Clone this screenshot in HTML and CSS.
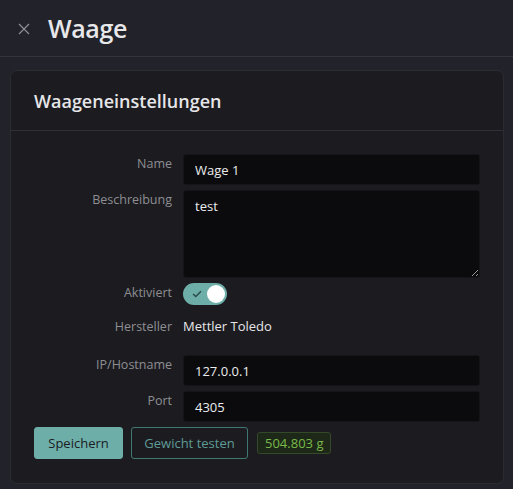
FILE: index.html
```html
<!DOCTYPE html>
<html lang="de">
<head>
<meta charset="utf-8">
<title>Waage</title>
<link rel="stylesheet" href="styles.css">
</head>
<body>
<header class="topbar">
  <span class="close" aria-label="Schließen">
    <svg width="12" height="12" viewBox="0 0 12 12"><path d="M1 1L11 11M11 1L1 11" stroke="#8b8c92" stroke-width="1.3" fill="none"/></svg>
  </span>
  <h1 class="title">Waage</h1>
</header>
<main class="main">
  <section class="card">
    <div class="card-header">Waageneinstellungen</div>
    <div class="card-body">
      <div class="row">
        <label class="label">Name</label>
        <input class="input" type="text" value="Wage 1">
      </div>
      <div class="row">
        <label class="label">Beschreibung</label>
        <textarea class="input textarea">test</textarea>
      </div>
      <div class="row">
        <label class="label">Aktiviert</label>
        <span class="toggle">
          <svg class="check" width="10" height="8" viewBox="0 0 10 8"><path d="M1 4L3.8 6.6L9 1.2" stroke="#2b4b48" stroke-width="1.4" fill="none"/></svg>
          <span class="knob"></span>
        </span>
      </div>
      <div class="row row-text">
        <span class="label">Hersteller</span>
        <span class="value">Mettler Toledo</span>
      </div>
      <div class="row">
        <label class="label">IP/Hostname</label>
        <input class="input" type="text" value="127.0.0.1">
      </div>
      <div class="row">
        <label class="label">Port</label>
        <input class="input" type="text" value="4305">
      </div>
      <div class="actions">
        <button class="btn btn-primary">Speichern</button>
        <button class="btn btn-outline">Gewicht testen</button>
        <span class="badge">504.803 g</span>
      </div>
    </div>
  </section>
</main>
</body>
</html>
```
FILE: styles.css
```css
* { box-sizing: border-box; }
html, body { margin: 0; padding: 0; }
body {
  background: #22232a;
  color: #e6e6e8;
  font-family: "Open Sans", "Noto Sans", sans-serif;
  font-size: 13px;
  height: 489px;
  overflow: hidden;
}
.topbar {
  height: 57px;
  display: flex;
  align-items: center;
  border-bottom: 1px solid #34353c;
  padding-left: 18px;
}
.close { display: flex; width: 12px; height: 12px; margin-top: 1px; }
.title {
  margin: 0 0 0 18px;
  font-size: 25px;
  font-weight: 600;
  color: #e8e8ea;
  letter-spacing: -0.4px;
}
.main { padding: 13px 9px 0 10px; }
.card {
  background: #1c1c20;
  border: 1px solid #2b2c32;
  border-radius: 7px;
}
.card-header {
  height: 60px;
  display: flex;
  align-items: center;
  padding-left: 23px;
  font-size: 18px;
  font-weight: 600;
  color: #e6e6e8;
  border-bottom: 1px solid #2f3036;
}
.card-body {
  padding: 23px 23px 24px 23px;
  display: flex;
  flex-direction: column;
  gap: 5px;
}
.row { display: flex; align-items: flex-start; }
.label {
  width: 138px;
  flex: none;
  text-align: right;
  color: #8e8e93;
  font-size: 12.5px;
  font-weight: 500;
  line-height: 17px;
  padding-top: 1px;
  margin-right: 11px;
}
.input {
  display: block;
  flex: 1;
  height: 31px;
  margin: 0;
  background: #0b0b0d;
  border: 1px solid #151518;
  border-radius: 3px;
  color: #ececee;
  font-family: inherit;
  font-size: 13px;
  padding: 0 11px;
  outline: none;
}
.textarea {
  height: 88px;
  padding: 7px 11px;
  resize: vertical;
  line-height: 17px;
  color-scheme: dark;
}
.toggle {
  width: 44px;
  height: 22px;
  border-radius: 11px;
  background: #6eaea9;
  display: flex;
  align-items: center;
  justify-content: space-between;
  padding: 0 2px 0 9px;
}
.check { display: block; }
.knob {
  width: 18px;
  height: 18px;
  border-radius: 50%;
  background: #ffffff;
}
.row-text { height: 40px; padding-top: 8px; }
.row-text .label { padding-top: 0; }
.value { color: #e6e6e8; font-size: 13px; line-height: 17px; font-weight: 500; }
.actions { display: flex; align-items: center; gap: 8px; }
.btn {
  height: 32px;
  border-radius: 3px;
  font-family: inherit;
  font-size: 13px;
  font-weight: 500;
  padding: 0;
  cursor: pointer;
}
.btn-primary {
  background: #6eaea9;
  border: 1px solid #6eaea9;
  color: #1a1c1f;
  width: 89px;
}
.btn-outline {
  background: transparent;
  border: 1px solid #3f7773;
  color: #5e9b96;
  width: 117px;
}
.badge {
  margin-left: 1px;
  height: 22px;
  display: flex;
  align-items: center;
  padding: 0 7px;
  background: #1d2818;
  border: 1px solid #34482a;
  border-radius: 3px;
  color: #79b84a;
  font-size: 13px;
  font-weight: 500;
}
```
